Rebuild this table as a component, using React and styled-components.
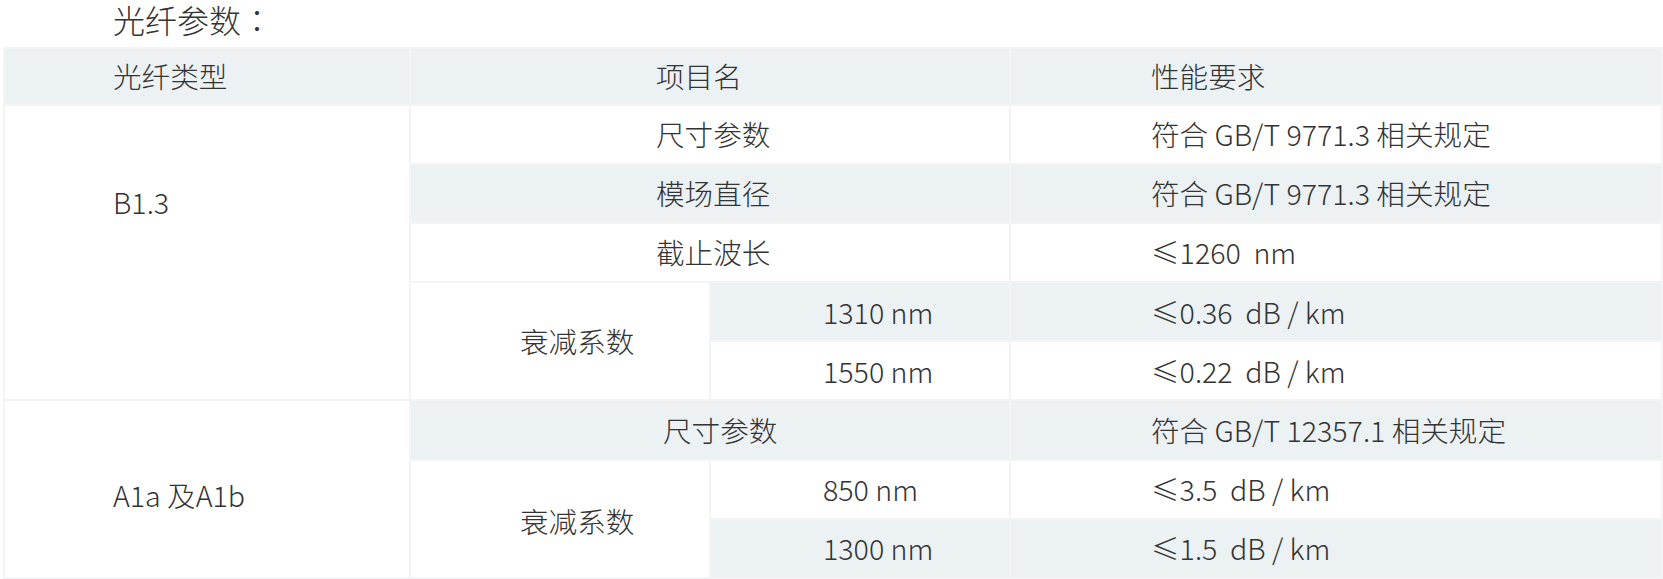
import React from "react";
import styled, { createGlobalStyle } from "styled-components";

const GlobalStyle = createGlobalStyle`
  html, body {
    margin: 0;
    padding: 0;
    background: #ffffff;
  }
  body {
    font-family: "Noto Sans CJK SC", "Noto Sans", sans-serif;
    color: #333333;
    overflow: hidden;
  }
`;

const Page = styled.div`
  width: 1663px;
  padding-left: 3px;
  box-sizing: border-box;
`;

const Title = styled.h3`
  margin: 0 0 9px 0;
  padding-left: 110px;
  font-size: 32px;
  font-weight: 300;
  line-height: 38px;
  height: 38px;
  color: #333333;
`;

const Colon = styled.span`
  font-family: "Noto Sans CJK TC", "Noto Sans CJK SC", sans-serif;
`;

const Table = styled.table`
  width: 1660px;
  border-collapse: collapse;
  table-layout: fixed;
  font-size: 28.6px;
  font-weight: 300;
  color: #333333;
`;

const Row = styled.tr`
  height: ${(p) => (p.$head ? 56.5 : 59.2)}px;
`;

const Cell = styled.td`
  box-sizing: border-box;
  border: 2px solid #f2f4f5;
  padding: ${(p) => p.$top || 0}px 0 ${(p) => p.$bottom || 0}px ${(p) => p.$pad || 0}px;
  background: ${(p) => (p.$shade ? "#ecf1f4" : "#ffffff")};
  text-align: left;
  vertical-align: middle;
  white-space: pre;
  font-weight: 300;
  line-height: 40px;
`;

const HeadCell = styled(Cell).attrs({ as: "th" })`
  background: #ecf1f4;
`;

export default function App() {
  return (
    <Page>
      <GlobalStyle />
      <Title>
        光纤参数<Colon>：</Colon>
      </Title>
      <Table>
        <colgroup>
          <col style={{ width: 406 }} />
          <col style={{ width: 300 }} />
          <col style={{ width: 300 }} />
          <col />
        </colgroup>
        <thead>
          <Row $head>
            <HeadCell $pad={108}>光纤类型</HeadCell>
            <HeadCell colSpan={2} $pad={245}>项目名</HeadCell>
            <HeadCell $pad={140}>性能要求</HeadCell>
          </Row>
        </thead>
        <tbody>
          <Row>
            <Cell rowSpan={5} $pad={108} $bottom={100}>B1.3</Cell>
            <Cell colSpan={2} $pad={245}>尺寸参数</Cell>
            <Cell $pad={140}>符合 GB/T 9771.3 相关规定</Cell>
          </Row>
          <Row>
            <Cell colSpan={2} $pad={245} $shade>模场直径</Cell>
            <Cell $pad={140} $shade>符合 GB/T 9771.3 相关规定</Cell>
          </Row>
          <Row>
            <Cell colSpan={2} $pad={245}>截止波长</Cell>
            <Cell $pad={140}>≤1260  nm</Cell>
          </Row>
          <Row>
            <Cell rowSpan={2} $pad={109}>衰减系数</Cell>
            <Cell $pad={112} $shade>1310 nm</Cell>
            <Cell $pad={140} $shade>≤0.36  dB / km</Cell>
          </Row>
          <Row>
            <Cell $pad={112}>1550 nm</Cell>
            <Cell $pad={140}>≤0.22  dB / km</Cell>
          </Row>
          <Row>
            <Cell rowSpan={3} $pad={108} $top={12}>A1a 及A1b</Cell>
            <Cell colSpan={2} $pad={252} $shade>尺寸参数</Cell>
            <Cell $pad={140} $shade>符合 GB/T 12357.1 相关规定</Cell>
          </Row>
          <Row>
            <Cell rowSpan={2} $pad={109} $top={5}>衰减系数</Cell>
            <Cell $pad={112}>850 nm</Cell>
            <Cell $pad={140}>≤3.5  dB / km</Cell>
          </Row>
          <Row>
            <Cell $pad={112} $shade>1300 nm</Cell>
            <Cell $pad={140} $shade>≤1.5  dB / km</Cell>
          </Row>
        </tbody>
      </Table>
    </Page>
  );
}
